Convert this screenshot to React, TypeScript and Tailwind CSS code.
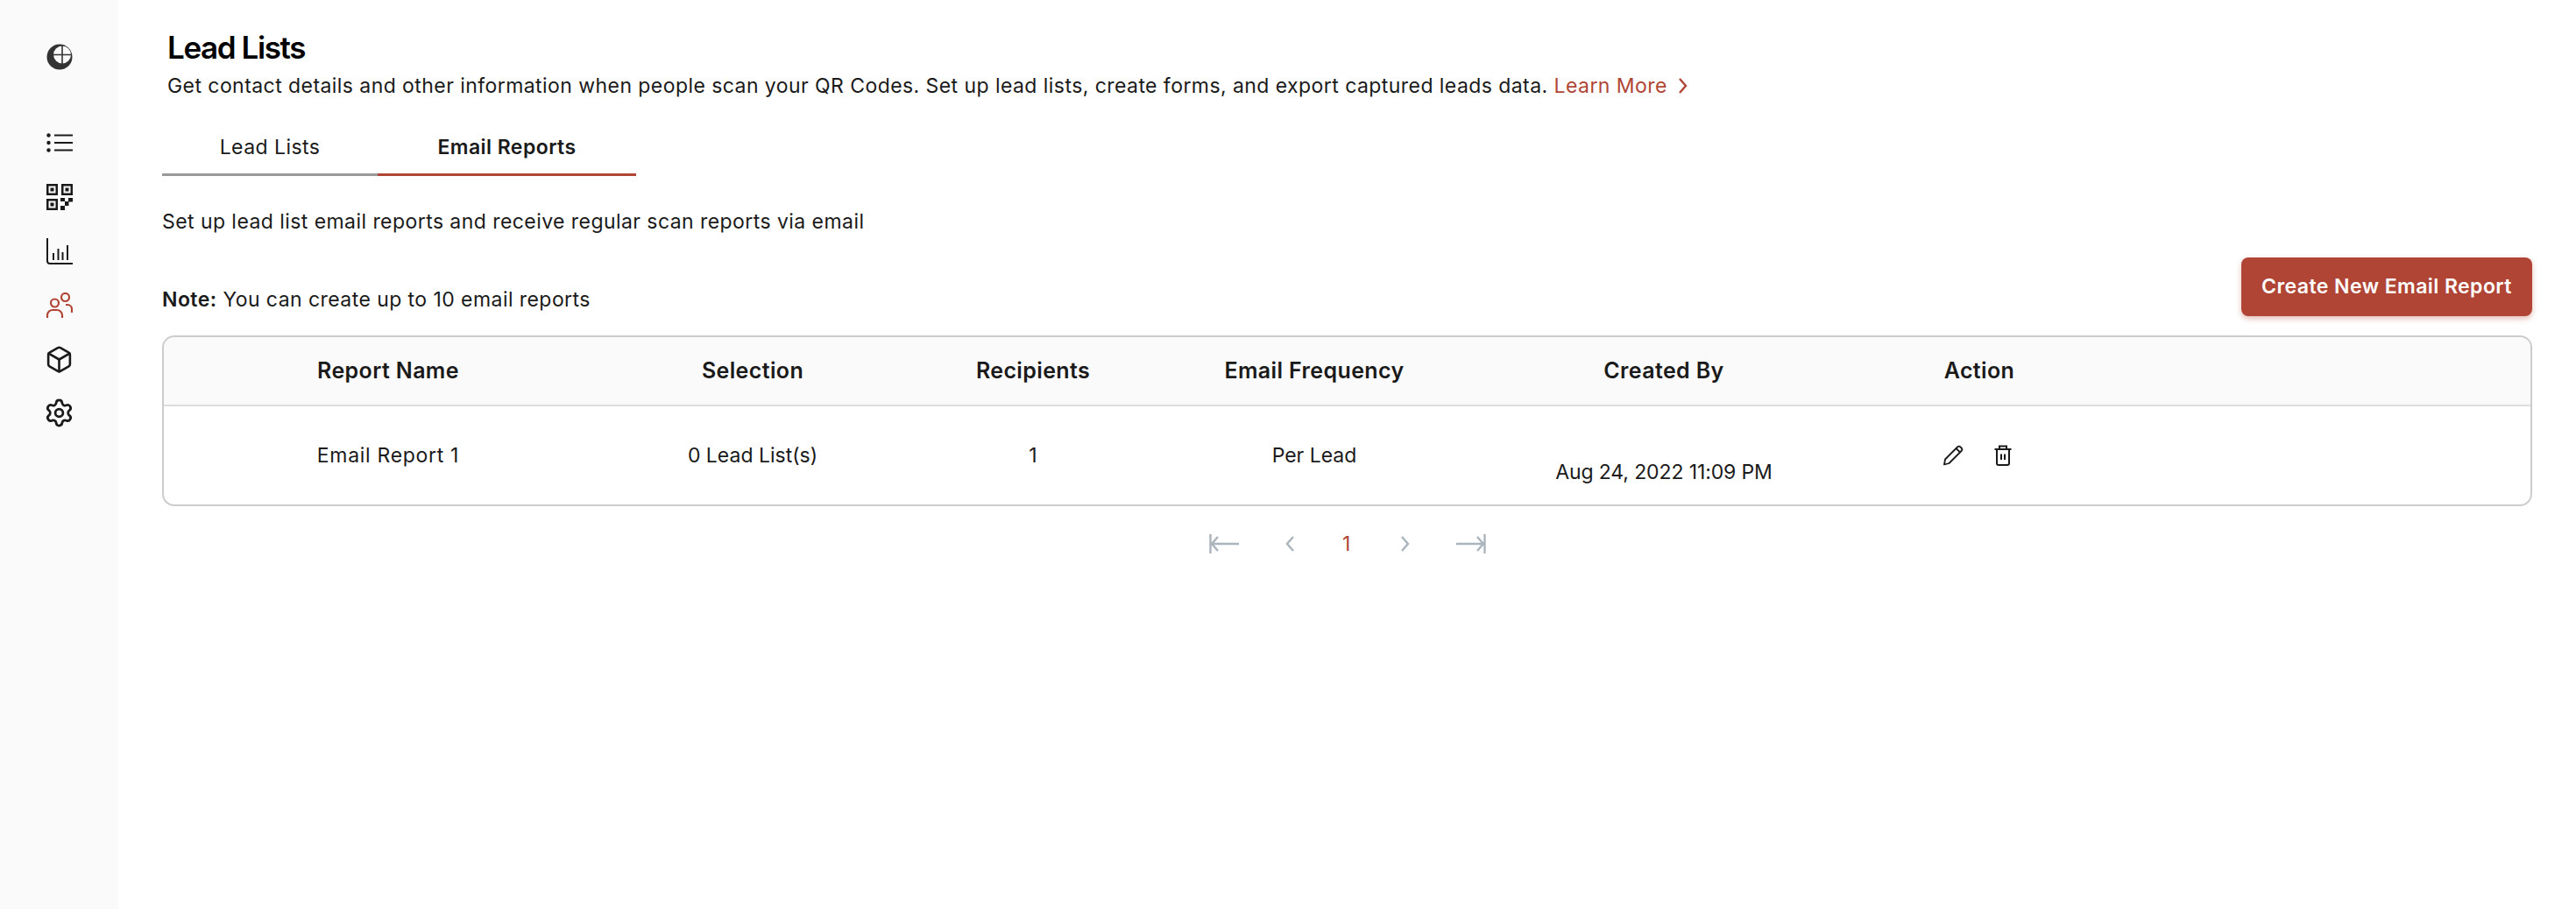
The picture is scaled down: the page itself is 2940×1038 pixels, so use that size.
import { Box, Settings } from "lucide-react";

const ink = "text-[#1a1a1a]";

function GlobeIcon() {
  return (
    <svg viewBox="0 0 30 30" className="h-[30px] w-[30px]" aria-hidden>
      <circle cx="15" cy="15" r="14.5" fill="#333" />
      <circle cx="18" cy="12.5" r="10" fill="#fafafa" />
      <path d="M18 1.500v21.500M7 12.500h22" stroke="#333" strokeWidth="1.600" />
    </svg>
  );
}

function ListIcon() {
  return (
    <svg viewBox="0 0 30 22" className="h-[22px] w-[30px]" fill="#1a1a1a" aria-hidden>
      <circle cx="2.5" cy="2.5" r="2.2" />
      <circle cx="2.5" cy="11" r="2.2" />
      <circle cx="2.5" cy="19.5" r="2.2" />
      <path d="M9 1.5h21v2H9zM9 10h21v2H9zM9 18.5h21v2H9z" />
    </svg>
  );
}

function QrIcon() {
  return (
    <svg viewBox="0 0 30 30" className="h-[30px] w-[30px]" aria-hidden>
      <g fill="none" stroke="#1a1a1a" strokeWidth="2.500">
        <rect x="1.250" y="1.250" width="10.500" height="10.500" />
        <rect x="18.250" y="1.250" width="10.500" height="10.500" />
        <rect x="1.250" y="18.250" width="10.500" height="10.500" />
      </g>
      <path
        fill="#1a1a1a"
        d="M4.500 4.500h4v4h-4zM21.500 4.500h4v4h-4zM4.500 21.500h4v4h-4zM16 16h5v4h-5zM25 16h5v4.500h-5zM21 20h4.500v5H21zM16 25h5v5h-5z"
      />
    </svg>
  );
}

function ChartIcon() {
  return (
    <svg viewBox="0 0 30 30" className="h-[30px] w-[30px]" fill="none" stroke="#1a1a1a" aria-hidden>
      <path d="M1 0v26a3 3 0 0 0 3 3h26" strokeWidth="2" />
      <path d="M8 17v8M13.500 12v13M18.500 16v9M24 8v17" strokeWidth="2" />
    </svg>
  );
}

function PeopleIcon() {
  return (
    <svg viewBox="0 0 30 30" className="h-[30px] w-[30px]" fill="none" stroke="#b04535" strokeWidth="2.200" aria-hidden>
      <circle cx="9.500" cy="12" r="4.500" />
      <path d="M1 29v-3a6 6 0 0 1 6-6h5a6 6 0 0 1 6 6v3" />
      <circle cx="21.500" cy="5.500" r="4.500" />
      <path d="M22 14h2a5 5 0 0 1 5 5v4" />
    </svg>
  );
}

function PencilIcon() {
  return (
    <svg viewBox="0 0 24 24" className="h-6 w-6" fill="none" stroke="#1a1a1a" strokeWidth="1.800" strokeLinejoin="round" aria-hidden>
      <path d="M3 16.500 17 2.500a2.500 2.500 0 0 1 3.500 0l1 1a2.500 2.500 0 0 1 0 3.500L7.500 21 2 22.500z" />
      <path d="M15.500 4l4.500 4.500" />
    </svg>
  );
}

function TrashIcon() {
  return (
    <svg viewBox="0 0 20 24" className="h-6 w-5" fill="none" stroke="#1a1a1a" strokeWidth="2" aria-hidden>
      <path d="M.5 5h19M6 5V1.500h8V5M3 5v16a2 2 0 0 0 2 2h10a2 2 0 0 0 2-2V5M8 10.500v6.500M12 10.500v6.500" />
    </svg>
  );
}

function EdgeArrow({ flip }: { flip?: boolean }) {
  return (
    <svg
      viewBox="0 0 34 22"
      className={flip ? "h-[22px] w-[34px] -scale-x-100" : "h-[22px] w-[34px]"}
      fill="none"
      stroke="#aab4bd"
      strokeWidth="2.400"
      aria-hidden
    >
      <path d="M1.500 0v22M3 11h31M10 3l-7 8 7 8" />
    </svg>
  );
}

function Chevron({ flip, color = "#aab4bd" }: { flip?: boolean; color?: string }) {
  return (
    <svg
      viewBox="0 0 12 20"
      className={flip ? "h-5 w-3 -scale-x-100" : "h-5 w-3"}
      fill="none"
      stroke={color}
      strokeWidth="2.400"
      aria-hidden
    >
      <path d="M2 2l7 8-7 8" />
    </svg>
  );
}

const columns = [
  { title: "Report Name", value: "Email Report 1", fit: "tracking-[0.03em]" },
  { title: "Selection", value: "0 Lead List(s)", fit: "" },
  { title: "Recipients", value: "1", fit: "" },
  { title: "Email Frequency", value: "Per Lead", fit: "" },
];

const gridCols = "grid grid-cols-[512px_320px_320px_322px_476px_244px_1fr]";

export default function App() {
  return (
    <div className={`flex min-h-[1038px] bg-white font-['Inter',sans-serif] text-[23px] tracking-[0.019em] ${ink}`}>
      <aside className="flex w-[135px] shrink-0 flex-col items-center bg-[#fafafa] pt-[50px]">
        <GlobeIcon />
        <nav className="mt-[52px] flex flex-col items-center">
          <div className="flex h-[62px] items-center"><ListIcon /></div>
          <div className="flex h-[62px] items-center"><QrIcon /></div>
          <div className="flex h-[62px] items-center"><ChartIcon /></div>
          <div className="flex h-[62px] items-center"><PeopleIcon /></div>
          <div className="flex h-[61px] items-center"><Box size={33} strokeWidth={1.900} /></div>
          <div className="flex h-[60px] items-center"><Settings size={35} strokeWidth={1.900} /></div>
        </nav>
      </aside>

      <main className="flex-1 pl-[50px] pr-[50px]">
        <h1 className="mt-[31px] pl-[6px] text-[35px] leading-[46px] font-semibold tracking-[-0.04em] text-black">
          Lead Lists
        </h1>
        <p className="mt-[3px] flex items-center pl-[6px] leading-[36px]">
          <span>
            Get contact details and other information when people scan your QR Codes. Set up lead lists, create forms,
            and export captured leads data.{" "}
            <span className="text-[#b04535]">Learn More</span>
          </span>
          <span className="ml-3"><Chevron color="#b04535" /></span>
        </p>

        <div className="mt-[32px] flex leading-[36px]">
          <div className="flex h-[53px] w-[246px] items-start justify-center border-b-[3px] border-[#999] pt-[2px]">
            Lead Lists
          </div>
          <div className="flex h-[53px] w-[295px] items-start justify-center border-b-[3px] border-[#b04535] pt-[2px] font-semibold">
            Email Reports
          </div>
        </div>

        <p className="mt-[34px] leading-[36px]">Set up lead list email reports and receive regular scan reports via email</p>

        <div className="mt-[23px] flex items-end justify-between">
          <p className="mb-[1px] leading-[36px]">
            <span className="font-semibold">Note:</span> You can create up to 10 email reports
          </p>
          <button className="h-[67px] w-[332px] rounded-[8px] bg-[#b04535] font-semibold text-white shadow-[0_3px_6px_rgba(176,69,53,0.35)]">
            Create New Email Report
          </button>
        </div>

        <div className="mt-[22px] overflow-hidden rounded-[14px] border-2 border-[#ccc]">
          <div className={`${gridCols} h-[79px] items-center border-b-2 border-[#ddd] bg-[#fafafa] text-center text-[25px] font-semibold tracking-[0.015em]`}>
            {columns.map((c) => (
              <div key={c.title}>{c.title}</div>
            ))}
            <div>Created By</div>
            <div>Action</div>
          </div>
          <div className={`${gridCols} h-[112px] items-center text-center tracking-normal`}>
            {columns.map((c) => (
              <div key={c.title} className={c.fit}>{c.value}</div>
            ))}
            <div className="pt-[38px] tracking-[-0.005em]">Aug 24, 2022 11:09 PM</div>
            <div className="flex items-center justify-center gap-[35px] pr-[6px]">
              <PencilIcon />
              <TrashIcon />
            </div>
          </div>
        </div>

        <div className="mt-[26px] flex items-center pl-[1195px]">
          <EdgeArrow />
          <span className="ml-[52px]"><Chevron flip /></span>
          <span className="ml-[54px] text-[#b04535]">1</span>
          <span className="ml-[56px]"><Chevron /></span>
          <span className="ml-[52px]"><EdgeArrow flip /></span>
        </div>
      </main>
    </div>
  );
}
